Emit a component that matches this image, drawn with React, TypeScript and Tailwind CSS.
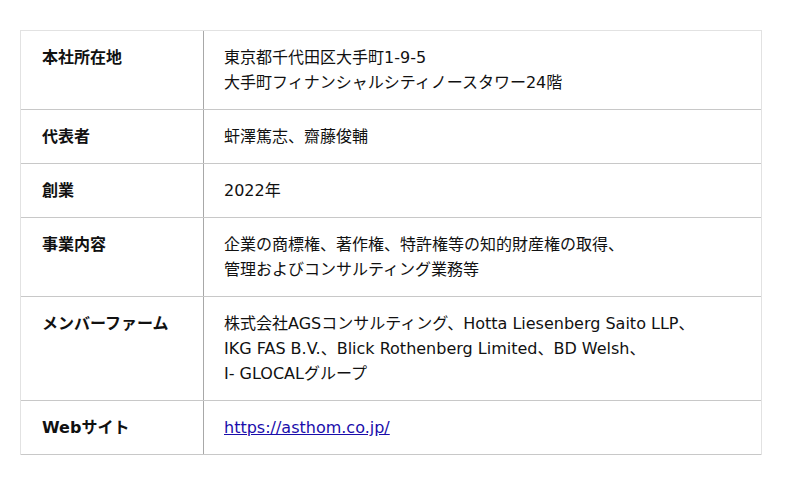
const rows: { label: string; lines: React.ReactNode[] }[] = [
  { label: "本社所在地", lines: ["東京都千代田区大手町1-9-5", "大手町フィナンシャルシティノースタワー24階"] },
  { label: "代表者", lines: ["虷澤篤志、齋藤俊輔"] },
  { label: "創業", lines: ["2022年"] },
  { label: "事業内容", lines: ["企業の商標権、著作権、特許権等の知的財産権の取得、", "管理およびコンサルティング業務等"] },
  {
    label: "メンバーファーム",
    lines: [
      "株式会社AGSコンサルティング、Hotta Liesenberg Saito LLP、",
      "IKG FAS B.V.、Blick Rothenberg Limited、BD Welsh、",
      "I- GLOCALグループ",
    ],
  },
  {
    label: "Webサイト",
    lines: [
      <a key="u" href="#" className="text-[#1a0dab] underline">
        https://asthom.co.jp/
      </a>,
    ],
  },
];

export default function App() {
  return (
    <div
      className="w-[800px] h-[485px] bg-white pt-[30px] pl-[20px] text-[16px] text-[#111]"
      style={{ fontFamily: '"DejaVu Sans", "Noto Sans CJK JP", sans-serif' }}
    >
      <div className="w-[742px] border-t border-l border-r border-[#e2e2e2]">
        {rows.map((r) => (
          <div key={r.label} className="flex border-b border-[#c8c8c8]">
            <div className="w-[183px] shrink-0 border-r border-[#a8a8a8] pl-[21px] py-[14px] font-bold leading-[25px]">
              {r.label}
            </div>
            <div className="pl-[20px] py-[14px] leading-[25px]">
              {r.lines.map((l, i) => (
                <div key={i}>{l}</div>
              ))}
            </div>
          </div>
        ))}
      </div>
    </div>
  );
}
